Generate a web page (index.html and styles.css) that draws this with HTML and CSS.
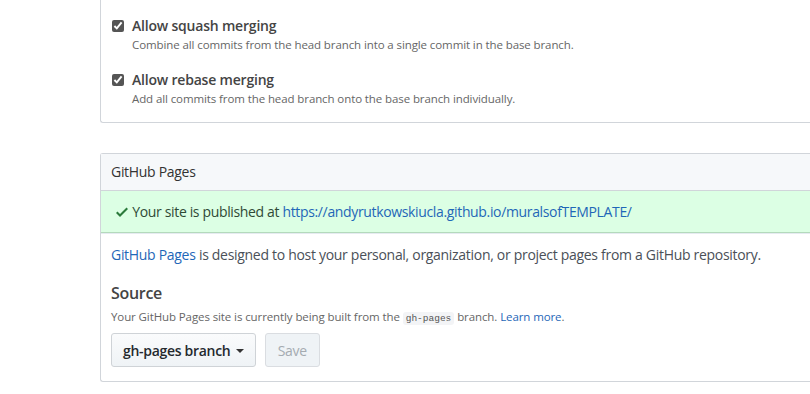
FILE: index.html
```html
<!DOCTYPE html>
<html lang="en">
<head>
    <meta charset="UTF-8">
    <title>Options</title>
    <link rel="stylesheet" href="styles.css">
</head>
<body>
    <div class="settings">
        <div class="box merge-box">
            <div class="check-row">
                <input type="checkbox" checked>
                <div>
                    <div class="check-title">Allow squash merging</div>
                    <div class="note">Combine all commits from the head branch into a single commit in the base branch.</div>
                </div>
            </div>
            <div class="check-row">
                <input type="checkbox" checked>
                <div>
                    <div class="check-title">Allow rebase merging</div>
                    <div class="note">Add all commits from the head branch onto the base branch individually.</div>
                </div>
            </div>
        </div>

        <div class="box pages-box">
            <div class="box-header">GitHub Pages</div>
            <div class="flash-success">
                <svg class="octicon" width="12" height="16" viewBox="0 0 12 16"><path fill="#2b7a3b" d="M12 5l-8 8-4-4 1.5-1.5L4 10l6.5-6.5L12 5z"/></svg>
                Your site is published at <a href="#">https://andyrutkowskiucla.github.io/muralsofTEMPLATE/</a>
            </div>
            <div class="box-body">
                <p class="lead"><a href="#">GitHub Pages</a> is designed to host your personal, organization, or project pages from a GitHub repository.</p>
                <h3>Source</h3>
                <p class="note">Your GitHub Pages site is currently being built from the <code>gh-pages</code> branch. <a href="#">Learn more</a>.</p>
                <div class="actions">
                    <button class="btn">gh-pages branch <span class="caret"></span></button>
                    <button class="btn" disabled>Save</button>
                </div>
            </div>
        </div>
    </div>
</body>
</html>
```

FILE: styles.css
```css
body {
    margin: 0;
    font-family: "Open Sans", "Noto Sans", Arial, sans-serif;
    font-size: 14px;
    letter-spacing: -0.3px;
    color: #4a5058;
    background: #fff;
    overflow: hidden;
}
a {
    color: #1f67b8;
    text-decoration: none;
}
.settings {
    padding-left: 100px;
}
.box {
    width: 760px;
    border: 1px solid #d1d5da;
    border-right: 0;
}

/* --- merge options --- */
.merge-box {
    border-top: 0;
    border-radius: 0 0 0 3px;
    padding: 16px 10px 14px;
}
.check-row {
    display: flex;
    gap: 8px;
    margin-bottom: 16px;
}
.check-row:last-child {
    margin-bottom: 0;
}
.check-row input {
    width: 12px;
    height: 12px;
    margin: 4px 0 0 1px;
    accent-color: #555;
}
.check-title {
    font-weight: 600;
    font-size: 14px;
    line-height: 20px;
    color: #444;
    letter-spacing: -0.2px;
}
.note {
    font-size: 11.5px;
    line-height: 18px;
    color: #666;
    margin: 0;
    letter-spacing: -0.1px;
}

/* --- pages box --- */
.pages-box {
    margin-top: 30px;
    border-radius: 3px 0 0 3px;
}
.box-header {
    background: #f6f8fa;
    height: 36px;
    line-height: 36px;
    padding: 0 10px;
    color: #333;
    border-bottom: 1px solid #d1d5da;
}
.flash-success {
    background: #dcffe4;
    border-bottom: 1px solid #b4d9bc;
    height: 41px;
    line-height: 41px;
    padding: 0 15px;
    color: #2f4a36;
    letter-spacing: -0.35px;
}
.octicon {
    vertical-align: -3px;
    margin-right: 1px;
}
.box-body {
    padding: 10px 10px 14px;
    border-top: 1px solid #e6ebf1;
}
.lead {
    margin: 0 0 16px;
    line-height: 22px;
}
h3 {
    margin: 0;
    font-size: 16px;
    font-weight: 600;
    line-height: 22px;
    color: #444;
}
.box-body .note {
    margin-top: 4px;
}
code {
    font-family: "Liberation Mono", monospace;
    font-size: 9.5px;
    letter-spacing: 0;
    background: #f3f4f6;
    color: #555;
    padding: 1px 3px;
    border-radius: 3px;
}
.actions {
    display: flex;
    gap: 9px;
    margin-top: 5px;
}
.btn {
    font-family: inherit;
    font-size: 14px;
    font-weight: 600;
    letter-spacing: -0.3px;
    color: #24292e;
    height: 34px;
    padding: 0 11px;
    border: 1px solid #cfd3d7;
    border-radius: 3px;
    background: linear-gradient(#fafbfc, #eff3f6);
}
.btn:disabled {
    color: #a5abb1;
    background: #eff3f6;
    border-color: #dadde1;
    font-weight: 400;
    padding: 0 12px;
}
.caret {
    display: inline-block;
    border-top: 4px solid #333;
    border-left: 4px solid transparent;
    border-right: 4px solid transparent;
    vertical-align: 3px;
    margin-left: 2px;
}
```
